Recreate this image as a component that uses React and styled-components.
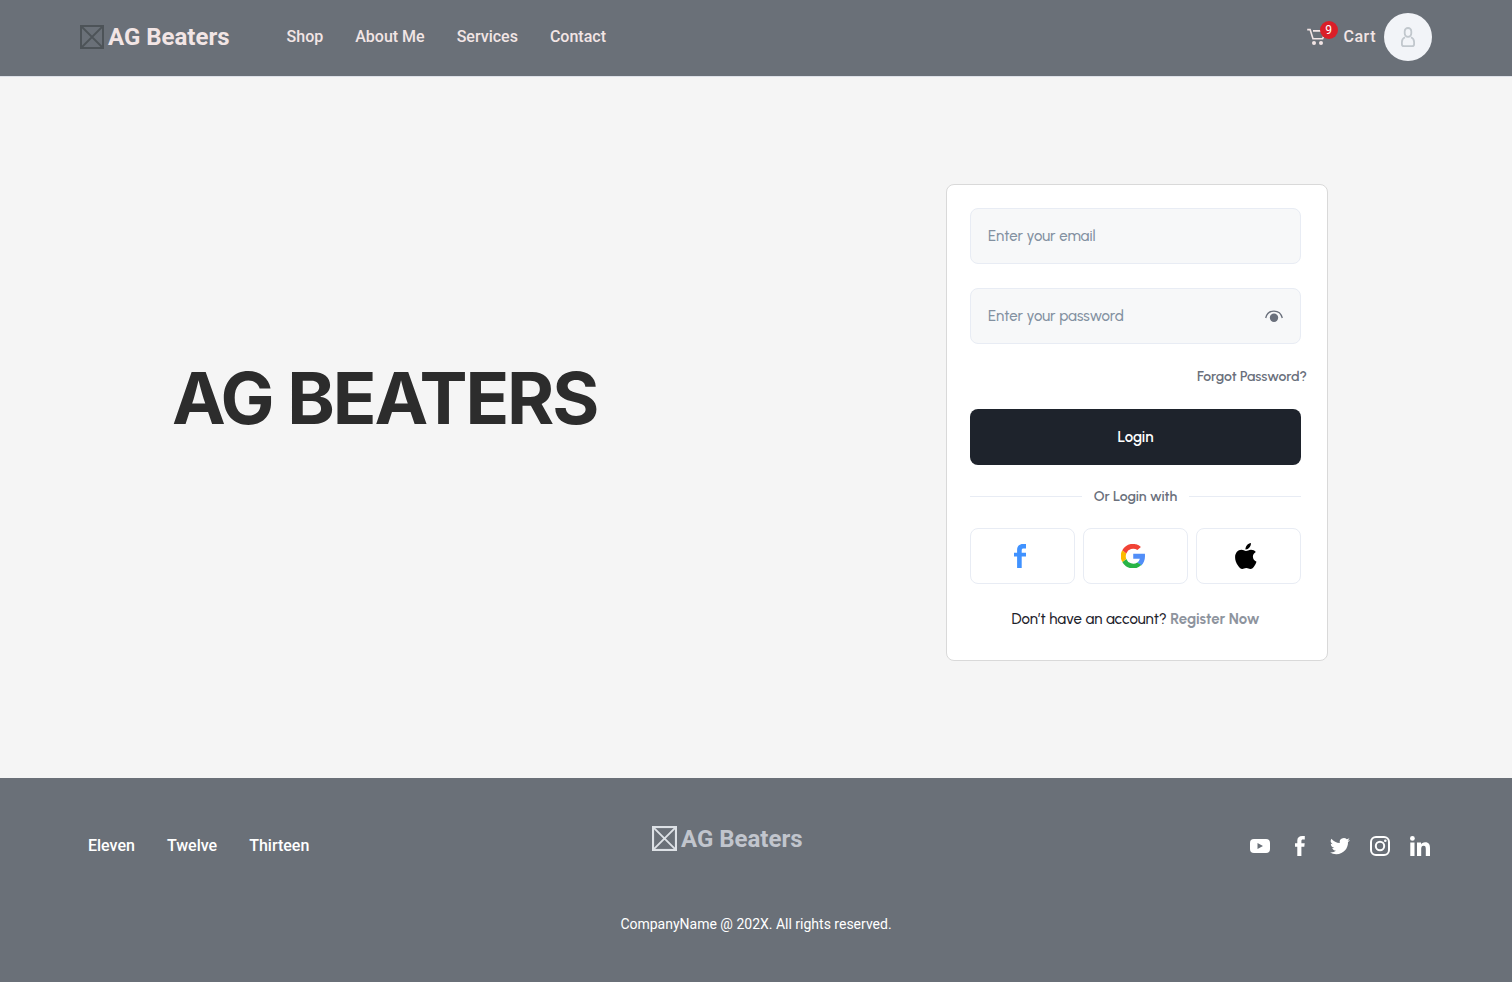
import React from "react";
import styled, { createGlobalStyle } from "styled-components";

const GlobalStyle = createGlobalStyle`
  *, *::before, *::after { box-sizing: border-box; }
  body { margin: 0; background: #f5f5f5; font-family: Roboto, "Liberation Sans", sans-serif; }
  a { color: inherit; text-decoration: none; }
  button, input { font: inherit; margin: 0; }
  button { cursor: pointer; padding: 0; }
  svg { display: block; flex: none; }
`;

const Page = styled.div`
  min-height: 100vh;
  display: flex;
  flex-direction: column;
`;

const Header = styled.header`
  display: flex;
  align-items: center;
  gap: 57px;
  padding: 13px 80px 15px;
  background: #6a7078;
  border-bottom: 1px solid #dde1e8;
`;

const Brand = styled.a`
  display: flex;
  align-items: center;
  gap: 4px;
  font-size: 24px;
  line-height: 24px;
  font-weight: 700;
  color: ${(p) => (p.$muted ? "#c1c5cd" : "#f2e5e5")};
`;

const Links = styled.nav`
  display: flex;
  gap: 32px;
  padding-left: ${(p) => (p.$inset ? "8px" : "0")};
  font-size: 16px;
  line-height: 24px;
  font-weight: 500;
  color: ${(p) => p.$color};
`;

const Account = styled.div`
  margin-left: auto;
  display: flex;
  align-items: center;
  gap: 8px;
`;

const CartLink = styled.a`
  display: flex;
  align-items: center;
  gap: 18px;
  font-size: 16px;
  line-height: 24px;
  font-weight: 500;
  letter-spacing: 0.5px;
  color: #f2e5e5;
`;

const CartIcon = styled.span`
  position: relative;
`;

const Badge = styled.span`
  position: absolute;
  top: -6px;
  right: -12px;
  width: 18px;
  height: 18px;
  border-radius: 50%;
  background: #da1e28;
  color: #fff;
  font-size: 12px;
  line-height: 18px;
  font-weight: 400;
  letter-spacing: 0;
  text-align: center;
`;

const Avatar = styled.button`
  width: 48px;
  height: 48px;
  display: grid;
  place-items: center;
  border: 0;
  border-radius: 50%;
  background: #f2f4f8;
`;

const Main = styled.main`
  flex: 1;
  display: flex;
  align-items: center;
  justify-content: space-between;
  gap: 48px;
  padding: 106px 184px 116px 172px;
`;

const Title = styled.h1`
  margin: 0;
  padding-bottom: 50px;
  font-family: Inter, sans-serif;
  font-size: 72px;
  line-height: 86px;
  font-weight: 700;
  letter-spacing: -0.03em;
  color: #2c2c2c;
`;

const Card = styled.form`
  width: 382px;
  flex: none;
  display: flex;
  flex-direction: column;
  gap: 24px;
  padding: 23px 26px 30px 23px;
  border: 1px solid #d9d9d9;
  border-radius: 8px;
  background: #fff;
  font-family: Urbanist, Lato, sans-serif;
`;

const Field = styled.div`
  height: 56px;
  display: flex;
  align-items: center;
  padding: 0 16px 0 17px;
  border: 1px solid #e8ecf4;
  border-radius: 8px;
  background: #f7f8f9;
`;

const TextBox = styled.input`
  flex: 1;
  min-width: 0;
  padding: 0;
  border: 0;
  outline: 0;
  background: transparent;
  color: #1e232c;
  font-size: 15px;
  line-height: 20px;
  font-weight: 500;
  &::placeholder { color: #8391a1; opacity: 1; }
`;

const RevealButton = styled.button`
  border: 0;
  background: none;
`;

const ForgotLink = styled.a`
  align-self: flex-end;
  margin-right: -6px;
  font-size: 14px;
  line-height: 17px;
  font-weight: 600;
  color: #6a707c;
`;

const LoginButton = styled.button`
  height: 56px;
  border: 0;
  border-radius: 8px;
  background: #1e232c;
  color: #fff;
  font-size: 15px;
  font-weight: 600;
`;

const Divider = styled.div`
  display: flex;
  align-items: center;
  gap: 12px;
  font-size: 14px;
  line-height: 15px;
  font-weight: 600;
  color: #6a707c;
  &::before, &::after {
    content: "";
    flex: 1;
    height: 1px;
    background: #e8ecf4;
  }
`;

const Providers = styled.div`
  display: grid;
  grid-template-columns: repeat(3, 1fr);
  gap: 8px;
`;

const ProviderButton = styled.button`
  height: 56px;
  display: grid;
  place-items: center;
  padding-right: 6px;
  border: 1px solid #e8ecf4;
  border-radius: 8px;
  background: #fff;
`;

const Register = styled.p`
  margin: 0;
  text-align: center;
  font-size: 15px;
  line-height: 22px;
  font-weight: 500;
  color: #1e232c;
  a { font-weight: 700; color: #8e949e; }
`;

const Footer = styled.footer`
  display: flex;
  flex-direction: column;
  gap: 48px;
  padding: 48px 80px;
  background: #6a7078;
  color: #fff;
`;

const FooterRow = styled.div`
  display: grid;
  grid-template-columns: 1fr 208px 1fr;
  align-items: center;
  min-height: 40px;
`;

const FooterBrand = styled.div`
  align-self: start;
`;

const Socials = styled.div`
  display: flex;
  justify-content: flex-end;
  gap: 16px;
`;

const Copyright = styled.p`
  margin: 0;
  text-align: center;
  font-size: 14px;
  line-height: 20px;
`;

const BoxMark = ({ color, size }) => (
  <svg width={size} height={size} viewBox="0 0 24 24" fill="none" stroke={color}>
    <rect x="1" y="1" width="22" height="22" strokeWidth="2" />
    <path d="M2 2l20 20M22 2L2 22" strokeWidth="1.8" />
  </svg>
);

const CartGlyph = () => (
  <svg width="20" height="20" viewBox="0 0 20 20" fill="none" stroke="#f2e5e5" strokeWidth="1.6">
    <path d="M1.2 2.600h2.900l2.900 9.200h9.600l2-5M7 3.900h11" />
    <circle cx="8" cy="16" r="2" fill="#f2e5e5" stroke="none" />
    <circle cx="15" cy="16" r="2" fill="#f2e5e5" stroke="none" />
  </svg>
);

const UserGlyph = () => (
  <svg width="24" height="24" viewBox="0 0 24 24" fill="none" stroke="#c1c7cd" strokeWidth="1.8">
    <rect x="8.700" y="3" width="6.600" height="8.800" rx="3.300" />
    <path d="M9 12.200C6.800 13.200 5.900 15 5.900 17v2.200c0 1.200.8 1.900 1.900 1.900h8.400c1.100 0 1.900-.7 1.900-1.900V17c0-2-.9-3.800-3.100-4.800" />
  </svg>
);

const EyeGlyph = () => (
  <svg width="20" height="20" viewBox="0 0 20 20" fill="none">
    <path d="M1.700 12C2.800 7.600 6 5.100 10 5.100S17.200 7.600 18.300 12" stroke="#6a707c" strokeWidth="1.300" />
    <circle cx="10" cy="11.800" r="4.200" fill="#6a707c" />
  </svg>
);

const FacebookMark = () => (
  <svg width="26" height="26" viewBox="0 0 26 26">
    <path fill="#4092ff" d="M19 1v4.400h-2.300c-1.500 0-2 .6-2 2v2.300H19v3.900h-4.300V25H10.100V13.600H7V9.700h3.100V7.200C10.100 3.200 12.300 1 15.900 1z" />
  </svg>
);

const GoogleMark = () => (
  <svg width="24" height="24" viewBox="0 0 24 24">
    <path fill="#518ef8" d="M24 9.820H12.240v4.900h6.600a5.800 5.800 0 0 1-2.500 3.700l3.900 3.080C22.600 19.300 24 16 24 12.280c0-.9 0-1.700-.1-2.460z" />
    <path fill="#28b446" d="M16.340 18.420A7.400 7.400 0 0 1 5.300 14.900l-4 3.100A12 12 0 0 0 20.240 21.100z" />
    <path fill="#fbbb00" d="M5.300 14.900a7.500 7.500 0 0 1 0-5.500L1.300 6.300a12 12 0 0 0 0 11.700z" />
    <path fill="#f14336" d="M5.300 9.400A7.300 7.300 0 0 1 16.400 6.100l3.500-3.200A12 12 0 0 0 1.300 6.300z" />
  </svg>
);

const AppleMark = () => (
  <svg width="26" height="26" viewBox="0 0 26 26">
    <path d="M17.900.1c.2 1.700-.5 3.300-1.500 4.500-1 1.200-2.400 2-3.900 1.900-.2-1.600.6-3.300 1.500-4.300C15 1 16.600.2 17.900.1zM22.800 8.900c-1.800 1.100-2.900 2.600-2.900 4.700 0 2.400 1.400 4.300 3.600 5.200-.5 1.500-1.200 2.900-2.100 4.200-1.200 1.800-2.400 3-4 3-1.700 0-2.100-1-4.100-1s-2.500 1-4.100 1c-1.700 0-2.900-1.400-4.100-3.200C2.800 19.500 2.100 16.700 2.100 14.200c0-4.300 2.800-7.400 6.300-7.400 1.800 0 3.300 1.200 4.600 1.200 1.200 0 2.900-1.300 5-1.300 1.900 0 3.700.8 4.800 2.200z" />
  </svg>
);

const socialLinks = [
  {
    name: "YouTube",
    mark: <path fillRule="evenodd" d="M6 5h12c2.700 0 4 1.300 4 4v6c0 2.700-1.300 4-4 4H6c-2.700 0-4-1.300-4-4V9c0-2.700 1.300-4 4-4zm3.500 4v6l5.500-3z" />,
  },
  {
    name: "Facebook",
    mark: <path d="M16.800 2v3.500h-1.900c-1.200 0-1.500.6-1.500 1.600v2.100h3.300l-.4 3.500h-2.900V22H9.300v-9.300H7V9.200h2.300V6.500C9.300 3.600 11.200 2 14.200 2z" />,
  },
  {
    name: "Twitter",
    mark: <path d="M22 5.900c-.7.300-1.500.6-2.400.7.900-.5 1.500-1.300 1.800-2.300-.8.500-1.700.8-2.600 1a4.100 4.100 0 0 0-7 3.700A11.700 11.700 0 0 1 3.400 4.700a4.100 4.100 0 0 0 1.300 5.500c-.7 0-1.300-.2-1.900-.5 0 2 1.400 3.700 3.300 4.100-.6.200-1.200.2-1.900.1.500 1.600 2 2.800 3.800 2.800A8.300 8.300 0 0 1 2 18.400a11.600 11.600 0 0 0 6.300 1.800c7.600 0 12-6.400 11.700-12.200.8-.6 1.500-1.300 2-2.100z" />,
  },
  {
    name: "Instagram",
    mark: (
      <g>
        <rect x="3" y="3" width="18" height="18" rx="5" fill="none" stroke="#fff" strokeWidth="2" />
        <circle cx="12" cy="12" r="4.200" fill="none" stroke="#fff" strokeWidth="2" />
        <circle cx="17.300" cy="6.700" r="1.300" />
      </g>
    ),
  },
  {
    name: "LinkedIn",
    mark: (
      <g>
        <circle cx="4.400" cy="4.400" r="2.400" />
        <path d="M2.300 8.600h4.200V22H2.300zM9 8.600h4v1.900c.6-1.200 2.100-2.200 4.100-2.200 4 0 4.900 2.500 4.900 6V22h-4.200v-6.700c0-1.700-.1-3.500-2.200-3.500-2.100 0-2.400 1.700-2.400 3.400V22H9z" />
      </g>
    ),
  },
];

export default function App() {
  return (
    <Page>
      <GlobalStyle />
      <Header>
        <Brand href="#">
          <BoxMark color="#4d5358" size={24} />
          AG Beaters
        </Brand>
        <Links $color="#f2e5e5" aria-label="Main">
          {["Shop", "About Me", "Services", "Contact"].map((name) => (
            <a key={name} href="#">{name}</a>
          ))}
        </Links>
        <Account>
          <CartLink href="#">
            <CartIcon>
              <CartGlyph />
              <Badge>9</Badge>
            </CartIcon>
            Cart
          </CartLink>
          <Avatar type="button" aria-label="Account">
            <UserGlyph />
          </Avatar>
        </Account>
      </Header>

      <Main>
        <Title>AG BEATERS</Title>
        <Card onSubmit={(e) => e.preventDefault()}>
          <Field>
            <TextBox type="email" placeholder="Enter your email" aria-label="Email" />
          </Field>
          <Field>
            <TextBox type="password" placeholder="Enter your password" aria-label="Password" />
            <RevealButton type="button" aria-label="Show password">
              <EyeGlyph />
            </RevealButton>
          </Field>
          <ForgotLink href="#">Forgot Password?</ForgotLink>
          <LoginButton type="submit">Login</LoginButton>
          <Divider>Or Login with</Divider>
          <Providers>
            <ProviderButton type="button" aria-label="Facebook"><FacebookMark /></ProviderButton>
            <ProviderButton type="button" aria-label="Google"><GoogleMark /></ProviderButton>
            <ProviderButton type="button" aria-label="Apple"><AppleMark /></ProviderButton>
          </Providers>
          <Register>
            Don’t have an account? <a href="#">Register Now</a>
          </Register>
        </Card>
      </Main>

      <Footer>
        <FooterRow>
          <Links $color="#fff" $inset aria-label="Footer">
            {["Eleven", "Twelve", "Thirteen"].map((name) => (
              <a key={name} href="#">{name}</a>
            ))}
          </Links>
          <FooterBrand>
            <Brand href="#" $muted>
              <BoxMark color="#dde1e6" size={25} />
              AG Beaters
            </Brand>
          </FooterBrand>
          <Socials>
            {socialLinks.map(({ name, mark }) => (
              <a key={name} href="#" aria-label={name}>
                <svg width="24" height="24" viewBox="0 0 24 24" fill="#fff">{mark}</svg>
              </a>
            ))}
          </Socials>
        </FooterRow>
        <Copyright>CompanyName @ 202X. All rights reserved.</Copyright>
      </Footer>
    </Page>
  );
}
